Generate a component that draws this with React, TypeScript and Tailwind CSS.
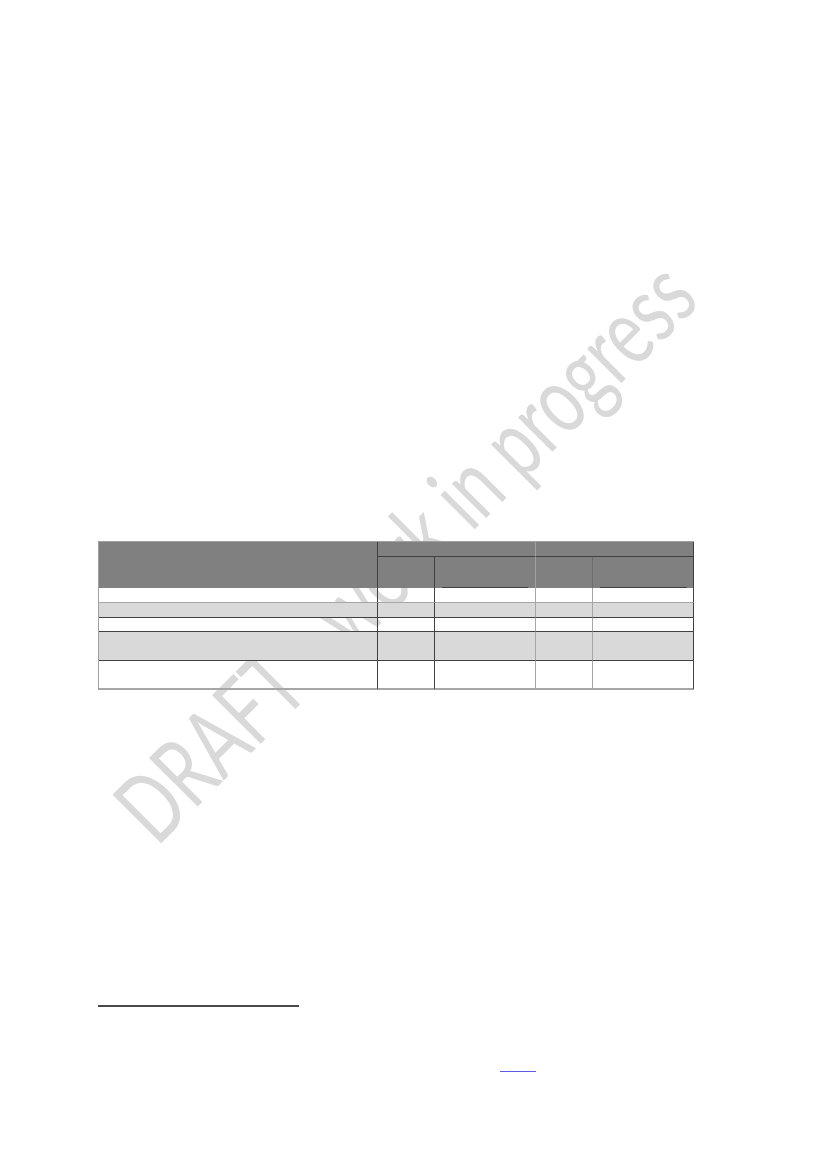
import React from "react";

const dark = "border-[#404040]";

export default function App() {
  return (
    <div className="relative w-[827px] h-[1169px] bg-white overflow-hidden font-['Liberation_Sans',sans-serif]">
      {/* watermark, sits behind the table */}
      <div className="absolute left-[403px] top-[549px] -translate-x-1/2 -translate-y-1/2 -rotate-[45deg] scale-x-[0.71] whitespace-nowrap font-['Lato',sans-serif] text-[96px] leading-none text-[#d9d9d9] select-none">
        DRAFT - work in progress
      </div>

      <div className="relative pt-[541px] pl-[98px]">
        <table className="border-separate border-spacing-0 w-[595px] table-fixed border-l border-t border-[#a0a0a0]">
          <colgroup>
            <col className="w-[279px]" />
            <col className="w-[57px]" />
            <col className="w-[101px]" />
            <col className="w-[57px]" />
            <col className="w-[101px]" />
          </colgroup>
          <thead>
            <tr className="h-[15px]">
              <th rowSpan={2} className={`bg-[#808080] border-r ${dark} p-0`} />
              <th colSpan={2} className={`bg-[#808080] border-r border-r-[#a0a0a0] border-b ${dark} p-0`} />
              <th colSpan={2} className={`bg-[#808080] border-r border-b ${dark} p-0`} />
            </tr>
            <tr className="h-[31px]">
              <th className={`bg-[#808080] border-r ${dark} p-0`} />
              <th className="bg-[#808080] border-r border-[#a0a0a0] p-0 align-bottom">
                <div className="ml-[7px] mr-[7px] border-b border-[#404040]" />
              </th>
              <th className="bg-[#808080] border-r border-[#6c6c6c] p-0" />
              <th className={`bg-[#808080] border-r ${dark} p-0 align-bottom`}>
                <div className="ml-[7px] mr-[6px] border-b border-[#404040]" />
              </th>
            </tr>
          </thead>
          <tbody>
            {[
              { h: "h-[15px]", bg: "", b: "border-b border-[#a6a6a6]" },
              { h: "h-[15px]", bg: "bg-[#d9d9d9]", b: "border-b border-[#404040]" },
              { h: "h-[14px]", bg: "", b: "border-b border-[#404040]" },
              { h: "h-[29px]", bg: "bg-[#d9d9d9]", b: "border-b border-[#404040]" },
              { h: "h-[29px]", bg: "", b: "border-b-2 border-[#a6a6a6]" },
            ].map((r, i) => (
              <tr key={i} className={r.h}>
                <td className={`${r.bg} ${r.b} border-r border-r-[#404040] p-0`} />
                <td className={`${r.bg} ${r.b} border-r border-r-[#404040] p-0`} />
                <td className={`${r.bg} ${r.b} border-r border-r-[#a6a6a6] p-0`} />
                <td className={`${r.bg} ${r.b} border-r border-r-[#a6a6a6] p-0`} />
                <td className={`${r.bg} ${r.b} border-r border-r-[#404040] p-0`} />
              </tr>
            ))}
          </tbody>
        </table>

        {/* footnote rule */}
        <div className="mt-[315px] w-[201px] h-[1.5px] bg-[#4a4a4a]" />

        {/* empty link */}
        <div className="mt-[64px] ml-[402px] w-[36px] border-b border-[#5b5be6]" />
      </div>
    </div>
  );
}
